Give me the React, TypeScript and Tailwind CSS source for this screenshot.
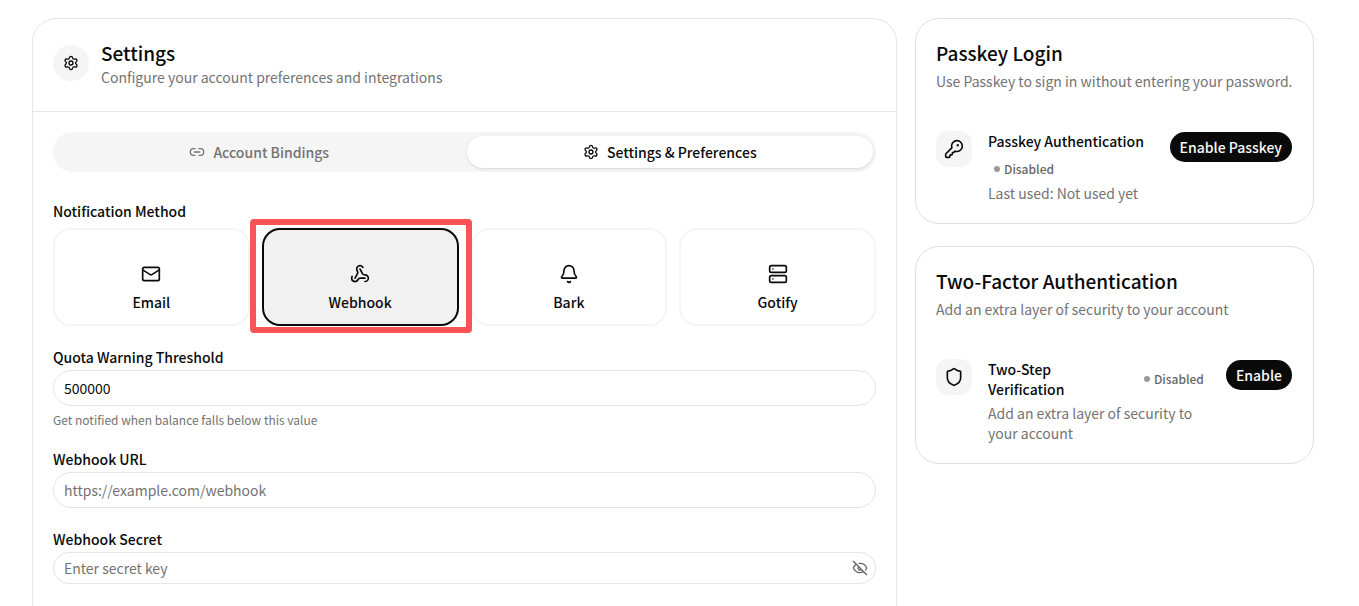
import React, { useState } from 'react';
import { Bell, EyeOff, KeyRound, Link2, Mail, Server, Settings, Shield, Webhook } from 'lucide-react';

type MethodId = 'email' | 'webhook' | 'bark' | 'gotify';

const methods: { id: MethodId; label: string; icon: React.ElementType }[] = [
  { id: 'email', label: 'Email', icon: Mail },
  { id: 'webhook', label: 'Webhook', icon: Webhook },
  { id: 'bark', label: 'Bark', icon: Bell },
  { id: 'gotify', label: 'Gotify', icon: Server },
];

const tabs = [
  { id: 'bindings', label: 'Account Bindings', icon: Link2 },
  { id: 'preferences', label: 'Settings & Preferences', icon: Settings },
];

const inputClass =
  'block w-full rounded-[18px] border border-[#e5e5e5] bg-white px-2.5 text-sm text-[#0a0a0a] placeholder:text-[#737373] outline-none focus:border-[#a1a1a1]';

const StatusBadge: React.FC<{ label: string }> = ({ label }) => (
  <span className="inline-flex h-5 items-center gap-1 px-1.5 text-xs font-medium text-[#666666]">
    <span className="size-1.5 rounded-full bg-[#999999]" />
    {label}
  </span>
);

const IconTile: React.FC<{ icon: React.ElementType }> = ({ icon: Icon }) => (
  <div className="flex size-9 shrink-0 items-center justify-center rounded-xl bg-[#f5f5f5]">
    <Icon className="size-5" />
  </div>
);

const PillButton: React.FC<{ children: React.ReactNode }> = ({ children }) => (
  <button
    type="button"
    className="mt-px h-[30px] shrink-0 rounded-full bg-[#0a0a0a] px-2.5 text-sm font-medium text-[#fafafa]"
  >
    {children}
  </button>
);

const SecurityCard: React.FC<{ title: string; description: string; children: React.ReactNode }> = ({
  title,
  description,
  children,
}) => (
  <section className="rounded-3xl border border-[#e0e0e0] bg-white p-5">
    <h2 className="text-[19px] leading-7 font-medium">{title}</h2>
    <p className="mt-1 text-sm leading-5 text-[#737373]">{description}</p>
    <div className="mt-10 flex items-start gap-4 pr-px">{children}</div>
  </section>
);

const App: React.FC = () => {
  const [activeTab, setActiveTab] = useState('preferences');
  const [method, setMethod] = useState<MethodId>('webhook');
  const [threshold, setThreshold] = useState('500000');
  const [showSecret, setShowSecret] = useState(false);

  return (
    <main className="grid h-screen grid-cols-[minmax(0,1fr)_399px] items-start gap-[18px] overflow-hidden bg-white pt-[18px] pr-[45px] pl-8 font-['Noto_Sans_CJK_SC',sans-serif] text-[#0a0a0a]">
      <section className="min-h-screen rounded-3xl border border-[#e5e5e5] bg-white">
        <header className="flex items-start gap-3 border-b border-[#e5e5e5] px-5 pt-5 pb-6">
          <div className="mt-1.5 flex size-9 shrink-0 items-center justify-center rounded-full bg-[#f5f5f5]">
            <Settings className="size-4" />
          </div>
          <div>
            <h1 className="text-[19px] leading-7 font-medium">Settings</h1>
            <p className="text-sm leading-5 text-[#737373]">Configure your account preferences and integrations</p>
          </div>
        </header>

        <div className="p-5 pb-16">
          {/* Tabs */}
          <div role="tablist" className="grid h-10 grid-cols-2 gap-1 rounded-full bg-[#f5f5f5] px-[3px] py-1">
            {tabs.map(({ id, label, icon: Icon }) => (
              <button
                key={id}
                type="button"
                role="tab"
                aria-selected={activeTab === id}
                onClick={() => setActiveTab(id)}
                className={`flex items-center justify-center gap-2 rounded-full text-sm font-medium ${
                  activeTab === id ? 'bg-white text-[#0a0a0a] shadow-sm' : 'text-[#737373]'
                }`}
              >
                <Icon className="size-4" />
                {label}
              </button>
            ))}
          </div>

          {/* Notification method */}
          <fieldset className="mt-[29px]">
            <legend className="text-sm leading-5 font-medium">Notification Method</legend>
            <div className="mt-[7px] grid grid-cols-4 gap-3">
              {methods.map(({ id, label, icon: Icon }) => (
                <label
                  key={id}
                  className={`relative flex h-[98px] cursor-pointer flex-col items-center justify-end gap-2 rounded-[18px] border-2 pb-3 ${
                    method === id ? 'border-[#0a0a0a] bg-[#f1f1f1]' : 'border-[#f5f5f5]'
                  }`}
                >
                  <input
                    type="radio"
                    name="method"
                    value={id}
                    checked={method === id}
                    onChange={() => setMethod(id)}
                    className="sr-only"
                  />
                  <Icon className="size-5" />
                  <span className="text-sm leading-5 font-medium">{label}</span>
                  {id === 'webhook' && (
                    <span className="pointer-events-none absolute -top-[11px] -right-[15px] -bottom-[9px] -left-[14px] z-10 rounded-sm border-6 border-[#fc5454]" />
                  )}
                </label>
              ))}
            </div>
          </fieldset>

          {/* Webhook fields */}
          <div className="mt-[21px]">
            <label htmlFor="threshold" className="block text-sm leading-5 font-medium">
              Quota Warning Threshold
            </label>
            <input
              id="threshold"
              type="text"
              inputMode="numeric"
              value={threshold}
              onChange={(e) => setThreshold(e.target.value)}
              className={`${inputClass} mt-[3px] h-9`}
            />
            <p className="mt-1.5 text-xs leading-4 text-[#737373]">Get notified when balance falls below this value</p>
          </div>

          <div className="mt-[21px]">
            <label htmlFor="url" className="block text-sm leading-5 font-medium">
              Webhook URL
            </label>
            <input
              id="url"
              type="url"
              placeholder="https://example.com/webhook"
              className={`${inputClass} mt-[3px] h-9`}
            />
          </div>

          <div className="mt-[21px]">
            <label htmlFor="secret" className="block text-sm leading-5 font-medium">
              Webhook Secret
            </label>
            <div className="relative mt-[3px]">
              <input
                id="secret"
                type={showSecret ? 'text' : 'password'}
                placeholder="Enter secret key"
                className={`${inputClass} h-8 pr-9`}
              />
              <button
                type="button"
                aria-label="Toggle secret visibility"
                onClick={() => setShowSecret((s) => !s)}
                className="absolute inset-y-0 right-2 flex items-center text-[#666666]"
              >
                <EyeOff className="size-4" />
              </button>
            </div>
          </div>
        </div>
      </section>

      <aside className="flex flex-col gap-[22px]">
        <SecurityCard title="Passkey Login" description="Use Passkey to sign in without entering your password.">
          <IconTile icon={KeyRound} />
          <div className="min-w-0 flex-1">
            <h3 className="text-sm leading-5 font-medium">Passkey Authentication</h3>
            <div className="mt-2 flex">
              <StatusBadge label="Disabled" />
            </div>
            <p className="mt-1 text-sm leading-5 text-[#737373]">Last used: Not used yet</p>
          </div>
          <PillButton>Enable Passkey</PillButton>
        </SecurityCard>

        <SecurityCard title="Two-Factor Authentication" description="Add an extra layer of security to your account">
          <IconTile icon={Shield} />
          <div className="min-w-0 flex-1">
            <div className="flex items-center justify-between">
              <h3 className="w-24 text-sm leading-5 font-medium">Two-Step Verification</h3>
              <StatusBadge label="Disabled" />
            </div>
            <p className="mt-1 text-sm leading-5 text-[#737373]">Add an extra layer of security to your account</p>
          </div>
          <PillButton>Enable</PillButton>
        </SecurityCard>
      </aside>
    </main>
  );
};

export default App;
